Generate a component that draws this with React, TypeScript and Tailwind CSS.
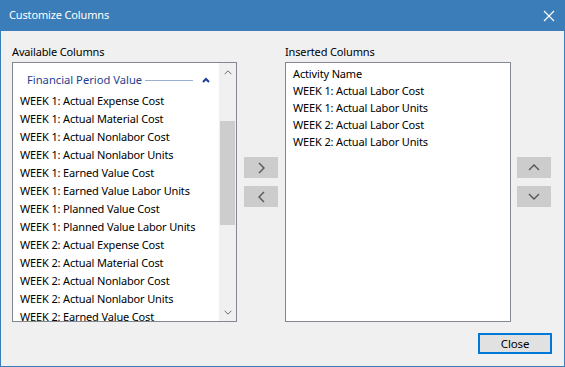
import { ReactNode } from 'react'

const available = [
  'WEEK 1: Actual Expense Cost',
  'WEEK 1: Actual Material Cost',
  'WEEK 1: Actual Nonlabor Cost',
  'WEEK 1: Actual Nonlabor Units',
  'WEEK 1: Earned Value Cost',
  'WEEK 1: Earned Value Labor Units',
  'WEEK 1: Planned Value Cost',
  'WEEK 1: Planned Value Labor Units',
  'WEEK 2: Actual Expense Cost',
  'WEEK 2: Actual Material Cost',
  'WEEK 2: Actual Nonlabor Cost',
  'WEEK 2: Actual Nonlabor Units',
  'WEEK 2: Earned Value Cost',
]

const inserted = [
  'Activity Name',
  'WEEK 1: Actual Labor Cost',
  'WEEK 1: Actual Labor Units',
  'WEEK 2: Actual Labor Cost',
  'WEEK 2: Actual Labor Units',
]

function Chevron({ dir, className }: { dir: 'up' | 'down' | 'left' | 'right'; className?: string }) {
  const d = {
    up: 'M1 6 L6 1 L11 6',
    down: 'M1 1 L6 6 L11 1',
    right: 'M1 1 L6 6 L1 11',
    left: 'M6 1 L1 6 L6 11',
  }[dir]
  const vertical = dir === 'left' || dir === 'right'
  return (
    <svg
      width={vertical ? 7 : 12}
      height={vertical ? 12 : 7}
      viewBox={vertical ? '0 0 7 12' : '0 0 12 7'}
      className={className}
    >
      <path d={d} fill="none" stroke="currentColor" strokeWidth="1.4" />
    </svg>
  )
}

function ArrowBtn({ children }: { children: ReactNode }) {
  return (
    <div className="w-[34px] h-[21px] bg-[#cccccc] flex items-center justify-center text-[#555]">
      {children}
    </div>
  )
}

export default function App() {
  return (
    <div
      className="w-[565px] h-[367px] flex flex-col bg-[#f0f0f0] text-[11px] tracking-[-0.15px] text-black overflow-hidden"
      style={{ fontFamily: '"Noto Sans", "Open Sans", sans-serif' }}
    >
      <header className="h-[31px] shrink-0 bg-[#3b7db8] flex items-center justify-between pl-[9px] pr-[10px] text-white">
        <span className="text-[11px]">Customize Columns</span>
        <svg width="12" height="12" viewBox="0 0 12 12">
          <path d="M1 1 L11 11 M11 1 L1 11" stroke="white" strokeWidth="1.2" />
        </svg>
      </header>

      <div className="flex-1 flex flex-col border-x border-b border-[#3b7db8] pl-[11px] pr-[13px]">
        <div className="flex pt-[13px]">
          {/* available */}
          <div className="w-[225px] flex flex-col">
            <div className="h-[16px] leading-[16px] mb-[2px]">Available Columns</div>
            <div className="h-[260px] border border-[#828790] bg-white flex overflow-hidden">
              <div className="flex-1 min-w-0 pl-[7px] pt-[7px]">
                <div className="flex items-center h-[22px] pb-[2px] pl-[7px] text-[#1d3f91] text-[11.2px] tracking-normal">
                  <span className="w-[118px] whitespace-nowrap">Financial Period Value</span>
                  <div className="w-[48px] h-px bg-[#9aaed4]" />
                  <svg width="8" height="6" viewBox="0 0 8 6" className="ml-[9px]">
                    <path d="M1 5 L4 2 L7 5" fill="none" stroke="#1d3f91" strokeWidth="2" />
                  </svg>
                </div>
                {available.map((a) => (
                  <div key={a} className="h-[18px] leading-[18px] whitespace-nowrap">
                    {a}
                  </div>
                ))}
              </div>
              <div className="w-[17px] shrink-0 bg-[#f0f0f0] flex flex-col items-center">
                <div className="h-[18px] flex items-center justify-center text-[#606060]">
                  <Chevron dir="up" className="w-[8px] h-[5px]" />
                </div>
                <div className="flex-1 w-full px-[1px] pt-[40px]">
                  <div className="h-[104px] bg-[#cdcdcd]" />
                </div>
                <div className="h-[17px] flex items-center justify-center text-[#606060]">
                  <Chevron dir="down" className="w-[8px] h-[5px]" />
                </div>
              </div>
            </div>
          </div>

          {/* add / remove */}
          <div className="ml-[7px] w-[34px] flex flex-col gap-[8px] pt-[113px]">
            <ArrowBtn>
              <Chevron dir="right" />
            </ArrowBtn>
            <ArrowBtn>
              <Chevron dir="left" />
            </ArrowBtn>
          </div>

          {/* inserted */}
          <div className="ml-[7px] w-[226px] flex flex-col">
            <div className="h-[16px] leading-[16px] mb-[2px]">Inserted Columns</div>
            <div className="h-[260px] border border-[#828790] bg-white pl-[7px] pt-[2px]">
              {inserted.map((a) => (
                <div key={a} className="h-[17px] leading-[17px] whitespace-nowrap">
                  {a}
                </div>
              ))}
            </div>
          </div>

          {/* move up / down */}
          <div className="ml-[6px] w-[34px] flex flex-col gap-[8px] pt-[113px]">
            <ArrowBtn>
              <Chevron dir="up" />
            </ArrowBtn>
            <ArrowBtn>
              <Chevron dir="down" />
            </ArrowBtn>
          </div>
        </div>

        <div className="flex justify-end mt-[11px]">
          <button className="w-[74px] h-[21px] border-2 border-[#0078d7] bg-[#e1e1e1] text-[11.5px] leading-[17px] mr-[-1px]">
            Close
          </button>
        </div>
      </div>
    </div>
  )
}
